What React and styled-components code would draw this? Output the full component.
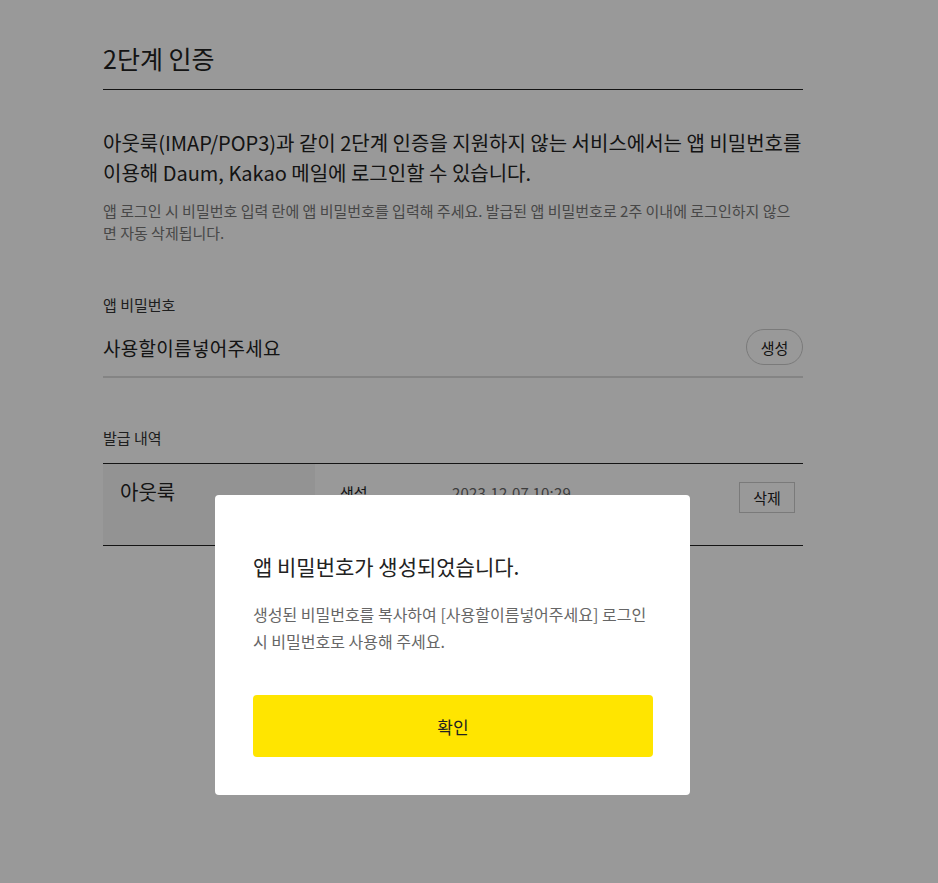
import React from 'react';
import styled, { createGlobalStyle } from 'styled-components';

const GlobalStyle = createGlobalStyle`
  html, body {
    margin: 0;
    padding: 0;
    background: #fff;
    font-family: 'Noto Sans CJK KR', 'Noto Sans', sans-serif;
    color: #222;
  }
  * { box-sizing: border-box; }
`;

const Page = styled.div`
  width: 700px;
  margin-left: 103px;
  padding-top: 40px;
  min-height: 883px;
`;

const Title = styled.h2`
  margin: 0;
  font-size: 25px;
  font-weight: 400;
  line-height: 36px;
  padding-bottom: 13px;
  border-bottom: 1px solid #222;
`;

const Lead = styled.p`
  margin: 38px 0 0;
  font-size: 20px;
  line-height: 30px;
  color: #222;
`;

const Note = styled.p`
  margin: 12px 0 0;
  font-size: 15px;
  line-height: 22px;
  color: #777;
`;

const Label = styled.div`
  margin-top: ${(p) => p.top}px;
  font-size: 15px;
  line-height: 20px;
  color: #333;
`;

const NameRow = styled.div`
  display: flex;
  align-items: center;
  justify-content: space-between;
  margin-top: 14px;
  padding-bottom: 11px;
  border-bottom: 2px solid #ddd;
`;

const NameText = styled.span`
  font-size: 19px;
  letter-spacing: 0.3px;
  color: #222;
`;

const PillButton = styled.button`
  width: 57px;
  height: 36px;
  border: 1px solid #ccc;
  border-radius: 18px;
  background: #fff;
  font-family: inherit;
  font-size: 15px;
  color: #222;
`;

const Table = styled.div`
  margin-top: 15px;
  border-top: 1px solid #222;
  border-bottom: 1px solid #222;
  display: flex;
  height: 83px;
`;

const NameCell = styled.div`
  width: 212px;
  background: #f5f5f5;
  padding: 13px 17px;
  font-size: 20px;
  color: #222;
`;

const InfoCell = styled.div`
  flex: 1;
  display: flex;
  align-items: flex-start;
  padding: 18px 8px 0 25px;
  font-size: 15px;
`;

const Status = styled.span`
  width: 112px;
  color: #222;
`;

const DateText = styled.span`
  flex: 1;
  color: #666;
  letter-spacing: 0.2px;
`;

const SquareButton = styled.button`
  width: 56px;
  height: 31px;
  border: 1px solid #ccc;
  background: #fff;
  font-family: inherit;
  font-size: 15px;
  color: #222;
`;

const Overlay = styled.div`
  position: fixed;
  inset: 0;
  background: rgba(0, 0, 0, 0.4);
`;

const Dialog = styled.div`
  position: fixed;
  left: 215px;
  top: 495px;
  width: 475px;
  height: 300px;
  background: #fff;
  border-radius: 4px;
  padding: 56px 37px 0 38px;
`;

const DialogTitle = styled.h3`
  margin: 0;
  font-size: 21px;
  font-weight: 400;
  line-height: 30px;
  color: #222;
`;

const DialogText = styled.p`
  margin: 20px 0 0;
  font-size: 16px;
  line-height: 27px;
  color: #666;
`;

const ConfirmButton = styled.button`
  display: block;
  width: 400px;
  height: 62px;
  margin-top: 40px;
  border: none;
  border-radius: 4px;
  background: #ffe500;
  font-family: inherit;
  font-size: 17px;
  color: #222;
`;

export default function App() {
  return (
    <>
      <GlobalStyle />
      <Page>
        <Title>2단계 인증</Title>
        <Lead>
          아웃룩(IMAP/POP3)과 같이 2단계 인증을 지원하지 않는 서비스에서는 앱 비밀번호를
          이용해 Daum, Kakao 메일에 로그인할 수 있습니다.
        </Lead>
        <Note>
          앱 로그인 시 비밀번호 입력 란에 앱 비밀번호를 입력해 주세요. 발급된 앱 비밀번호로 2주 이내에 로그인하지 않으면 자동 삭제됩니다.
        </Note>
        <Label top={51}>앱 비밀번호</Label>
        <NameRow>
          <NameText>사용할이름넣어주세요</NameText>
          <PillButton>생성</PillButton>
        </NameRow>
        <Label top={50}>발급 내역</Label>
        <Table>
          <NameCell>아웃룩</NameCell>
          <InfoCell>
            <Status>생성</Status>
            <DateText>2023.12.07 10:29</DateText>
            <SquareButton>삭제</SquareButton>
          </InfoCell>
        </Table>
      </Page>
      <Overlay />
      <Dialog>
        <DialogTitle>앱 비밀번호가 생성되었습니다.</DialogTitle>
        <DialogText>
          생성된 비밀번호를 복사하여 [사용할이름넣어주세요] 로그인 시 비밀번호로 사용해 주세요.
        </DialogText>
        <ConfirmButton>확인</ConfirmButton>
      </Dialog>
    </>
  );
}
